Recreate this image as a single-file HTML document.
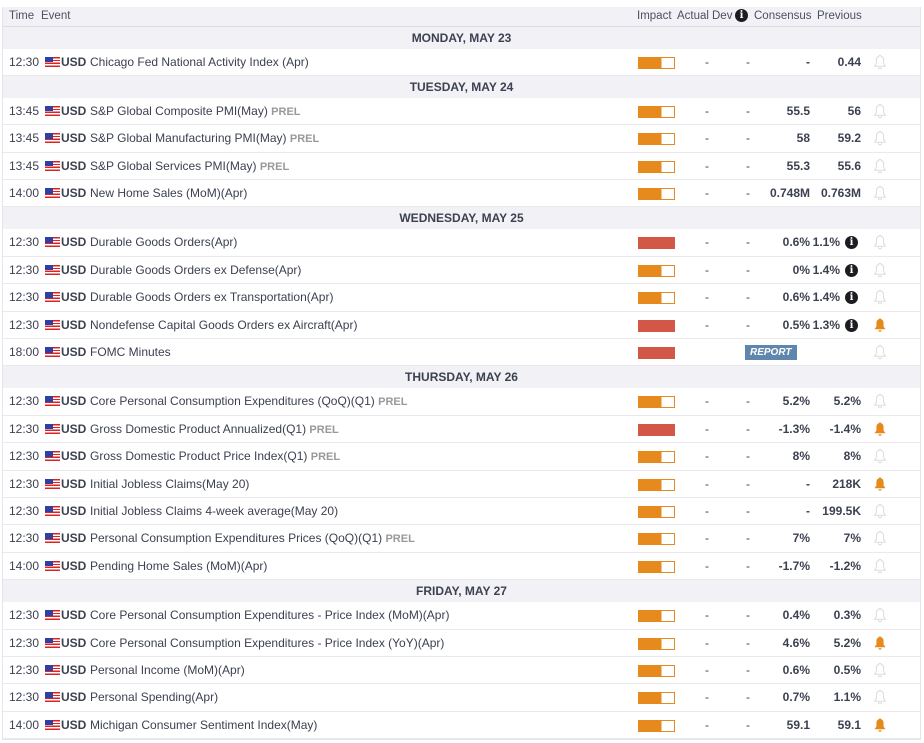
<!DOCTYPE html>
<html><head><meta charset="utf-8"><style>
*{margin:0;padding:0;box-sizing:border-box}
body{width:924px;height:743px;background:#fff;font-family:"Liberation Sans",Arial,sans-serif;font-size:12px;color:#3c4150;position:relative;overflow:hidden}
#t{position:absolute;left:2px;top:7px;width:919px;border-left:1px solid #e4e4ea;border-right:1px solid #e4e4ea;border-bottom:1px solid #e4e4ea}
.h{height:19.5px;background:#f2f2f6;border-bottom:1px solid #dcdce4;position:relative;color:#4b4f63;font-size:11.5px}
.d{height:22px;background:#f2f2f6;text-align:center;font-weight:bold;line-height:22px;font-size:12px;color:#3c4150}
.r{height:27.4px;border-bottom:1px solid #e9e9ee;position:relative;line-height:26px}
.r span,.h span{position:absolute;white-space:nowrap}
.tm{left:6px}
.fl{left:42px;top:8px;width:15px;height:10px;background:repeating-linear-gradient(#d22 0 1.4px,#fff 1.4px 2.8px)}
.fl:before{content:"";position:absolute;left:0;top:0;width:8px;height:5.6px;background:#3040a0}
.cu{left:58px;font-weight:bold}
.ev{left:87px}
.pr{color:#999;font-weight:bold;font-size:11px}
.im{left:635px;top:8px;width:37px;height:12px;border:1px solid #e68a1e;background:linear-gradient(90deg,#e68a1e 65%,#fff 65%)}
.im.hi{background:#d35746;border-color:#d35746}
.a{left:702px}.dv{left:743px}
.c{right:110px;font-weight:bold}
.p{right:59px;font-weight:bold}
.p2{right:80px;font-weight:bold}
.i{left:842px;top:7px;width:13px;height:13px;border-radius:50%;background:#1c1c22;color:#fff;font-size:10px;line-height:13px;text-align:center;font-weight:bold;font-family:"DejaVu Serif",serif}
.b{position:absolute;left:870px;top:5px}
.rep{left:742px;top:6px;background:#5f86ad;color:#fff;font-style:italic;font-weight:bold;font-size:10px;line-height:15px;padding:0 5px;height:15px}
</style></head><body>
<svg width="0" height="0" style="position:absolute"><defs>
<symbol id="bo" viewBox="0 0 14 16"><path d="M7 1.3c-.5 0-.8.3-.8.8C4.4 2.6 3.4 4.1 3.4 6v3.6L1.8 11.6v.7h10.4v-.7l-1.6-2V6c0-1.9-1-3.4-2.8-3.9 0-.5-.3-.8-.8-.8zM5.5 13.2a1.5 1.5 0 003 0" fill="none" stroke="#dcdcdc" stroke-width="1"/></symbol>
<symbol id="bf" viewBox="0 0 14 16"><path d="M7 1.3c-.5 0-.8.3-.8.8C4.4 2.6 3.4 4.1 3.4 6v3.6L1.8 11.6v.7h10.4v-.7l-1.6-2V6c0-1.9-1-3.4-2.8-3.9 0-.5-.3-.8-.8-.8zM5.5 13.2a1.5 1.5 0 003 0z" fill="#e8891c"/></symbol>
</defs></svg>
<div id="t">
<div class="h"><span style="left:6px;top:3px">Time</span><span style="left:38px;top:3px">Event</span><span style="left:634px;top:3px">Impact</span><span style="left:674px;top:3px">Actual</span><span style="left:709px;top:3px">Dev</span><span class="i" style="left:732px;top:2px">i</span><span style="left:751px;top:3px">Consensus</span><span style="left:814px;top:3px">Previous</span></div>

<div class="d">MONDAY, MAY 23</div>
<div class="r"><span class="tm">12:30</span><span class="fl"></span><span class="cu">USD</span><span class="ev">Chicago Fed National Activity Index (Apr)</span><span class="im"></span><span class="a">-</span><span class="dv">-</span><span class="c">-</span><span class="p">0.44</span><svg class="b" width="14" height="16"><use href="#bo"/></svg></div>

<div class="d">TUESDAY, MAY 24</div>
<div class="r"><span class="tm">13:45</span><span class="fl"></span><span class="cu">USD</span><span class="ev">S&amp;P Global Composite PMI(May) <b class="pr">PREL</b></span><span class="im"></span><span class="a">-</span><span class="dv">-</span><span class="c">55.5</span><span class="p">56</span><svg class="b" width="14" height="16"><use href="#bo"/></svg></div>
<div class="r"><span class="tm">13:45</span><span class="fl"></span><span class="cu">USD</span><span class="ev">S&amp;P Global Manufacturing PMI(May) <b class="pr">PREL</b></span><span class="im"></span><span class="a">-</span><span class="dv">-</span><span class="c">58</span><span class="p">59.2</span><svg class="b" width="14" height="16"><use href="#bo"/></svg></div>
<div class="r"><span class="tm">13:45</span><span class="fl"></span><span class="cu">USD</span><span class="ev">S&amp;P Global Services PMI(May) <b class="pr">PREL</b></span><span class="im"></span><span class="a">-</span><span class="dv">-</span><span class="c">55.3</span><span class="p">55.6</span><svg class="b" width="14" height="16"><use href="#bo"/></svg></div>
<div class="r"><span class="tm">14:00</span><span class="fl"></span><span class="cu">USD</span><span class="ev">New Home Sales (MoM)(Apr)</span><span class="im"></span><span class="a">-</span><span class="dv">-</span><span class="c">0.748M</span><span class="p">0.763M</span><svg class="b" width="14" height="16"><use href="#bo"/></svg></div>

<div class="d">WEDNESDAY, MAY 25</div>
<div class="r"><span class="tm">12:30</span><span class="fl"></span><span class="cu">USD</span><span class="ev">Durable Goods Orders(Apr)</span><span class="im hi"></span><span class="a">-</span><span class="dv">-</span><span class="c">0.6%</span><span class="p2">1.1%</span><span class="i">i</span><svg class="b" width="14" height="16"><use href="#bo"/></svg></div>
<div class="r"><span class="tm">12:30</span><span class="fl"></span><span class="cu">USD</span><span class="ev">Durable Goods Orders ex Defense(Apr)</span><span class="im"></span><span class="a">-</span><span class="dv">-</span><span class="c">0%</span><span class="p2">1.4%</span><span class="i">i</span><svg class="b" width="14" height="16"><use href="#bo"/></svg></div>
<div class="r"><span class="tm">12:30</span><span class="fl"></span><span class="cu">USD</span><span class="ev">Durable Goods Orders ex Transportation(Apr)</span><span class="im"></span><span class="a">-</span><span class="dv">-</span><span class="c">0.6%</span><span class="p2">1.4%</span><span class="i">i</span><svg class="b" width="14" height="16"><use href="#bo"/></svg></div>
<div class="r"><span class="tm">12:30</span><span class="fl"></span><span class="cu">USD</span><span class="ev">Nondefense Capital Goods Orders ex Aircraft(Apr)</span><span class="im hi"></span><span class="a">-</span><span class="dv">-</span><span class="c">0.5%</span><span class="p2">1.3%</span><span class="i">i</span><svg class="b" width="14" height="16"><use href="#bf"/></svg></div>
<div class="r"><span class="tm">18:00</span><span class="fl"></span><span class="cu">USD</span><span class="ev">FOMC Minutes</span><span class="im hi"></span><span class="rep">REPORT</span><svg class="b" width="14" height="16"><use href="#bo"/></svg></div>

<div class="d">THURSDAY, MAY 26</div>
<div class="r"><span class="tm">12:30</span><span class="fl"></span><span class="cu">USD</span><span class="ev">Core Personal Consumption Expenditures (QoQ)(Q1) <b class="pr">PREL</b></span><span class="im"></span><span class="a">-</span><span class="dv">-</span><span class="c">5.2%</span><span class="p">5.2%</span><svg class="b" width="14" height="16"><use href="#bo"/></svg></div>
<div class="r"><span class="tm">12:30</span><span class="fl"></span><span class="cu">USD</span><span class="ev">Gross Domestic Product Annualized(Q1) <b class="pr">PREL</b></span><span class="im hi"></span><span class="a">-</span><span class="dv">-</span><span class="c">-1.3%</span><span class="p">-1.4%</span><svg class="b" width="14" height="16"><use href="#bf"/></svg></div>
<div class="r"><span class="tm">12:30</span><span class="fl"></span><span class="cu">USD</span><span class="ev">Gross Domestic Product Price Index(Q1) <b class="pr">PREL</b></span><span class="im"></span><span class="a">-</span><span class="dv">-</span><span class="c">8%</span><span class="p">8%</span><svg class="b" width="14" height="16"><use href="#bo"/></svg></div>
<div class="r"><span class="tm">12:30</span><span class="fl"></span><span class="cu">USD</span><span class="ev">Initial Jobless Claims(May 20)</span><span class="im"></span><span class="a">-</span><span class="dv">-</span><span class="c">-</span><span class="p">218K</span><svg class="b" width="14" height="16"><use href="#bf"/></svg></div>
<div class="r"><span class="tm">12:30</span><span class="fl"></span><span class="cu">USD</span><span class="ev">Initial Jobless Claims 4-week average(May 20)</span><span class="im"></span><span class="a">-</span><span class="dv">-</span><span class="c">-</span><span class="p">199.5K</span><svg class="b" width="14" height="16"><use href="#bo"/></svg></div>
<div class="r"><span class="tm">12:30</span><span class="fl"></span><span class="cu">USD</span><span class="ev">Personal Consumption Expenditures Prices (QoQ)(Q1) <b class="pr">PREL</b></span><span class="im"></span><span class="a">-</span><span class="dv">-</span><span class="c">7%</span><span class="p">7%</span><svg class="b" width="14" height="16"><use href="#bo"/></svg></div>
<div class="r"><span class="tm">14:00</span><span class="fl"></span><span class="cu">USD</span><span class="ev">Pending Home Sales (MoM)(Apr)</span><span class="im"></span><span class="a">-</span><span class="dv">-</span><span class="c">-1.7%</span><span class="p">-1.2%</span><svg class="b" width="14" height="16"><use href="#bo"/></svg></div>

<div class="d">FRIDAY, MAY 27</div>
<div class="r"><span class="tm">12:30</span><span class="fl"></span><span class="cu">USD</span><span class="ev">Core Personal Consumption Expenditures - Price Index (MoM)(Apr)</span><span class="im"></span><span class="a">-</span><span class="dv">-</span><span class="c">0.4%</span><span class="p">0.3%</span><svg class="b" width="14" height="16"><use href="#bo"/></svg></div>
<div class="r"><span class="tm">12:30</span><span class="fl"></span><span class="cu">USD</span><span class="ev">Core Personal Consumption Expenditures - Price Index (YoY)(Apr)</span><span class="im"></span><span class="a">-</span><span class="dv">-</span><span class="c">4.6%</span><span class="p">5.2%</span><svg class="b" width="14" height="16"><use href="#bf"/></svg></div>
<div class="r"><span class="tm">12:30</span><span class="fl"></span><span class="cu">USD</span><span class="ev">Personal Income (MoM)(Apr)</span><span class="im"></span><span class="a">-</span><span class="dv">-</span><span class="c">0.6%</span><span class="p">0.5%</span><svg class="b" width="14" height="16"><use href="#bo"/></svg></div>
<div class="r"><span class="tm">12:30</span><span class="fl"></span><span class="cu">USD</span><span class="ev">Personal Spending(Apr)</span><span class="im"></span><span class="a">-</span><span class="dv">-</span><span class="c">0.7%</span><span class="p">1.1%</span><svg class="b" width="14" height="16"><use href="#bo"/></svg></div>
<div class="r"><span class="tm">14:00</span><span class="fl"></span><span class="cu">USD</span><span class="ev">Michigan Consumer Sentiment Index(May)</span><span class="im"></span><span class="a">-</span><span class="dv">-</span><span class="c">59.1</span><span class="p">59.1</span><svg class="b" width="14" height="16"><use href="#bf"/></svg></div>
</div>
</body></html>
